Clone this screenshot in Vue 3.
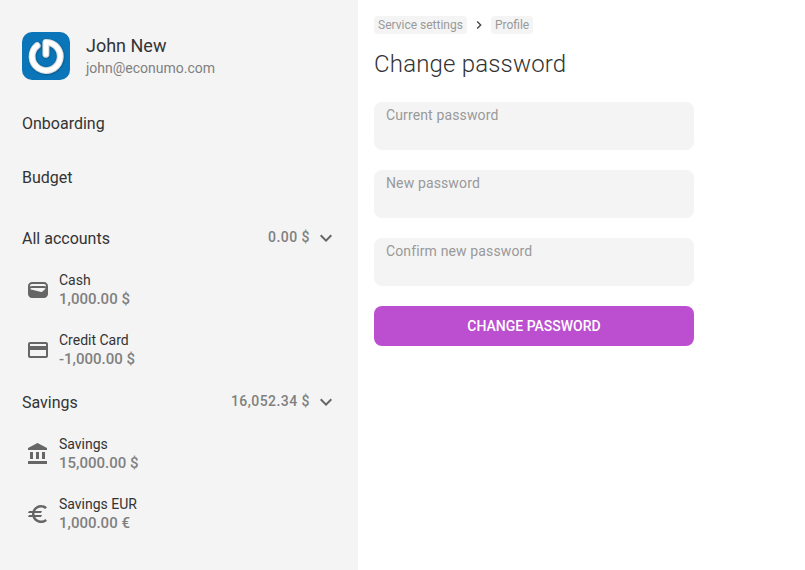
<script setup>
const icons = {
  wallet: 'M18 4H6C3.79 4 2 5.79 2 8v8c0 2.21 1.79 4 4 4h12c2.21 0 4-1.79 4-4V8c0-2.21-1.79-4-4-4zm-1.86 9.77c-.24.2-.57.28-.88.2L4.15 11.25C4.45 10.52 5.16 10 6 10h12c.67 0 1.26.34 1.63.84l-3.49 2.93zM6 6h12c1.1 0 2 .9 2 2v.55c-.59-.34-1.27-.55-2-.55H6c-.73 0-1.41.21-2 .55V8c0-1.1.9-2 2-2z',
  card: 'M20 4H4c-1.11 0-1.99.89-1.99 2L2 18c0 1.11.89 2 2 2h16c1.11 0 2-.89 2-2V6c0-1.11-.89-2-2-2zm0 14H4v-6h16v6zm0-10H4V6h16v2z',
  bank: 'M4 10v7h3v-7H4zm6 0v7h3v-7h-3zM2 22h19v-3H2v3zm14-12v7h3v-7h-3zm-4.5-9L2 6v2h19V6l-9.5-5z',
  euro: 'M15 18.5c-2.51 0-4.68-1.42-5.76-3.5H15l1-2H8.58c-.05-.33-.08-.66-.08-1s.03-.67.08-1H15l1-2H9.24C10.32 6.92 12.5 5.5 15 5.5c1.61 0 3.09.59 4.23 1.57L21 5.3C19.41 3.87 17.3 3 15 3c-3.92 0-7.24 2.51-8.48 6H3l-1 2h4.06c-.04.33-.06.66-.06 1s.02.67.06 1H3l-1 2h4.52c1.24 3.49 4.56 6 8.48 6 2.31 0 4.41-.87 6-2.3l-1.78-1.77c-1.13.98-2.6 1.57-4.22 1.57z',
}

const nav = ['Onboarding', 'Budget']

const folders = [
  {
    name: 'All accounts',
    total: '0.00 $',
    accounts: [
      { name: 'Cash', balance: '1,000.00 $', icon: 'wallet' },
      { name: 'Credit Card', balance: '-1,000.00 $', icon: 'card' },
    ],
  },
  {
    name: 'Savings',
    total: '16,052.34 $',
    accounts: [
      { name: 'Savings', balance: '15,000.00 $', icon: 'bank' },
      { name: 'Savings EUR', balance: '1,000.00 €', icon: 'euro' },
    ],
  },
]

const fields = ['Current password', 'New password', 'Confirm new password']
</script>

<template>
  <div class="layout">
    <aside class="sidebar">
      <div class="user">
        <svg class="avatar" viewBox="0 0 48 48">
          <defs>
            <filter id="avatar-shadow" x="-20%" y="-20%" width="140%" height="140%">
              <feDropShadow dx="0.4" dy="0.6" stdDeviation="0.8" flood-color="#03304f" flood-opacity="0.6" />
            </filter>
          </defs>
          <rect width="48" height="48" fill="#0a76b9" />
          <g fill="none" stroke-linecap="round" stroke-linejoin="round" filter="url(#avatar-shadow)">
            <path d="M15.1 13.6A14.1 14.1 0 1 0 23.9 10.3V22.3" stroke="#dedfe0" stroke-width="6.8" />
            <path d="M15.1 13.6A14.1 14.1 0 1 0 23.9 10.3V22.3" stroke="#fff" stroke-width="4.6" />
          </g>
        </svg>
        <div class="user-info">
          <div class="user-name">John New</div>
          <div class="user-email">john@econumo.com</div>
        </div>
      </div>

      <nav class="nav">
        <a v-for="item in nav" :key="item" class="nav-item">{{ item }}</a>
      </nav>

      <section v-for="folder in folders" :key="folder.name" class="folder">
        <header class="folder-head">
          <span class="folder-name">{{ folder.name }}</span>
          <span class="folder-total">{{ folder.total }}</span>
          <svg class="folder-arrow" viewBox="0 0 24 24">
            <path d="M16.59 8.59 12 13.17 7.41 8.59 6 10l6 6 6-6z" />
          </svg>
        </header>
        <div v-for="account in folder.accounts" :key="account.name" class="account">
          <svg class="account-icon" viewBox="0 0 24 24"><path :d="icons[account.icon]" /></svg>
          <div class="account-text">
            <div class="account-name">{{ account.name }}</div>
            <div class="account-balance">{{ account.balance }}</div>
          </div>
        </div>
      </section>
    </aside>

    <main class="content">
      <div class="crumbs">
        <a class="crumb">Service settings</a>
        <svg class="crumb-arrow" viewBox="0 0 24 24">
          <path d="M10 6 8.59 7.41 13.17 12l-4.58 4.59L10 18l6-6z" />
        </svg>
        <a class="crumb">Profile</a>
      </div>
      <h1 class="title">Change password</h1>
      <form class="form" @submit.prevent>
        <label v-for="field in fields" :key="field" class="field">
          <span class="field-label">{{ field }}</span>
          <input class="field-input" type="password" />
        </label>
        <button class="submit" type="submit">CHANGE PASSWORD</button>
      </form>
    </main>
  </div>
</template>

<style>
body {
  margin: 0;
  background: #fff;
}
</style>

<style scoped>
.layout {
  display: flex;
  height: 570px;
  overflow: hidden;
  font-family: Roboto, sans-serif;
  color: #333;
}
.sidebar {
  box-sizing: border-box;
  flex: none;
  width: 358px;
  padding: 32px 24px 0 22px;
  background: #f4f4f4;
}
.user {
  display: flex;
  gap: 16px;
  height: 48px;
}
.avatar {
  flex: none;
  width: 48px;
  height: 48px;
  border-radius: 10px;
}
.user-name {
  padding-top: 2px;
  font-size: 18px;
  line-height: 24px;
}
.user-email {
  font-size: 14px;
  line-height: 20px;
  color: #808080;
}
.nav {
  display: flex;
  flex-direction: column;
  padding: 17px 0 11px;
}
.nav-item {
  height: 54px;
  font-size: 16px;
  line-height: 54px;
}
.folder-head {
  display: flex;
  align-items: center;
  height: 44px;
}
.folder-name {
  flex: 1;
  padding-top: 2px;
  font-size: 16px;
  line-height: 24px;
}
.folder-total {
  padding-bottom: 2px;
  font-size: 14px;
  font-weight: 500;
  line-height: 20px;
  letter-spacing: 0.45px;
  color: #808080;
}
.folder-arrow {
  width: 24px;
  height: 24px;
  margin: 0 -4px 1px 4px;
  fill: #666;
}
.account {
  display: flex;
  align-items: center;
  height: 60px;
  padding-left: 4px;
}
.account-icon {
  flex: none;
  width: 24px;
  height: 24px;
  margin-right: 9px;
  fill: #666;
}
.account-name {
  font-size: 14px;
  line-height: 18px;
}
.account-balance {
  padding-bottom: 1px;
  font-size: 15px;
  font-weight: 500;
  line-height: 20px;
  color: #808080;
}
.content {
  flex: 1;
  padding: 16px 16px 0;
}
.crumbs {
  display: flex;
  align-items: center;
  height: 18px;
}
.crumb {
  padding: 0 4px;
  border-radius: 4px;
  background: #f4f4f4;
  font-size: 12px;
  line-height: 18px;
  color: #999;
}
.crumb-arrow {
  width: 16px;
  height: 16px;
  margin: 0 4px;
  fill: #444;
}
.title {
  margin: 14px 0 22px;
  font-size: 24px;
  font-weight: 300;
  line-height: 32px;
  letter-spacing: 0.18px;
}
.form {
  display: flex;
  flex-direction: column;
  gap: 20px;
  width: 320px;
}
.field {
  display: flex;
  flex-direction: column;
  box-sizing: border-box;
  height: 48px;
  padding: 4px 12px;
  border-radius: 8px;
  background: #f4f4f4;
}
.field-label {
  font-size: 14px;
  line-height: 19px;
  letter-spacing: 0.13px;
  color: #999;
}
.field-input {
  height: 20px;
  padding: 0;
  border: 0;
  outline: 0;
  background: transparent;
}
.submit {
  height: 40px;
  padding: 0;
  border: 0;
  border-radius: 8px;
  background: #bc4fd0;
  color: #fff;
  font-family: inherit;
  font-size: 14px;
  font-weight: 500;
}
</style>
